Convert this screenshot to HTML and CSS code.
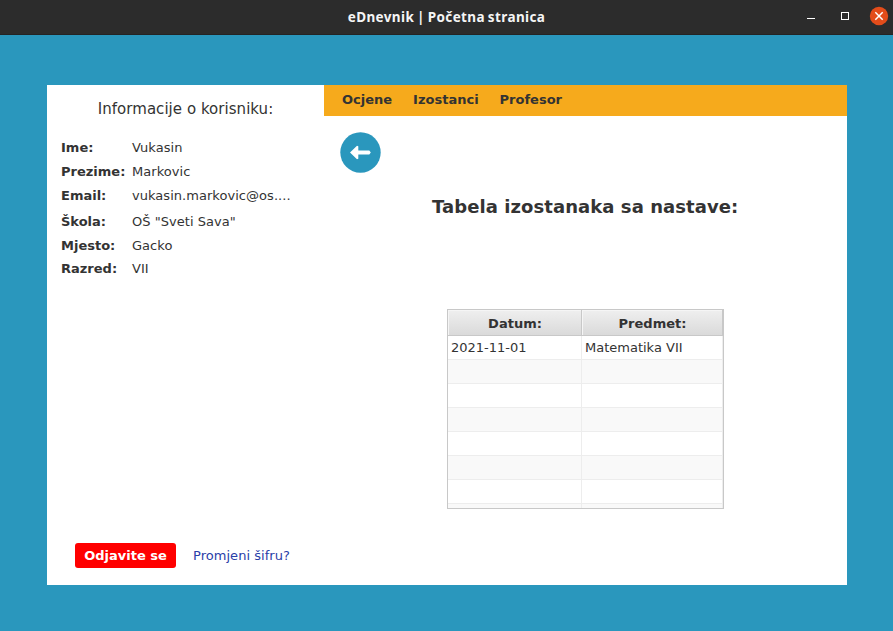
FILE: index.html
```html
<!DOCTYPE html>
<html lang="sr-Latn">
<head>
<meta charset="utf-8">
<title>eDnevnik | Početna stranica</title>
<link rel="stylesheet" href="styles.css">
</head>
<body>
<header class="titlebar">
  <h1 class="window-title">eDnevnik | Početna stranica</h1>
  <svg class="window-controls" width="100" height="34" viewBox="0 0 100 34">
    <path d="M14 18.5h8" stroke="#fff"/>
    <rect x="48.5" y="12.5" width="7" height="7" fill="none" stroke="#fff"/>
    <circle cx="86" cy="16" r="9.2" fill="#e34c1a"/>
    <path d="M82.3 12.3l7.4 7.4M89.7 12.3l-7.4 7.4" stroke="#fff" stroke-width="1.5"/>
  </svg>
</header>
<main class="panel">
  <aside class="sidebar">
    <h2 class="sidebar-title">Informacije o korisniku:</h2>
    <dl class="info">
      <dt>Ime:</dt><dd>Vukasin</dd>
      <dt>Prezime:</dt><dd>Markovic</dd>
      <dt>Email:</dt><dd>vukasin.markovic@os....</dd>
      <dt>Škola:</dt><dd>OŠ "Sveti Sava"</dd>
      <dt>Mjesto:</dt><dd>Gacko</dd>
      <dt>Razred:</dt><dd>VII</dd>
    </dl>
    <div class="actions">
      <button class="logout">Odjavite se</button>
      <a class="password-link">Promjeni šifru?</a>
    </div>
  </aside>
  <section class="content">
    <nav class="menu"><a>Ocjene</a><a>Izostanci</a><a>Profesor</a></nav>
    <svg class="back" width="42" height="42" viewBox="0 0 42 42">
      <circle cx="20.5" cy="20.5" r="20.2" fill="#2a97bd"/>
      <path d="M10 20.5l7-6.8 1.3.5v4.4h11l1.5 1.9-1.5 1.9h-11v4.4l-1.3.5z" fill="#fff"/>
    </svg>
    <h2 class="table-title">Tabela izostanaka sa nastave:</h2>
    <div class="table">
      <div class="row head"><span>Datum:</span><span>Predmet:</span></div>
      <div class="row"><span>2021-11-01</span><span>Matematika VII</span></div>
      <div class="row alt"><span></span><span></span></div>
      <div class="row"><span></span><span></span></div>
      <div class="row alt"><span></span><span></span></div>
      <div class="row"><span></span><span></span></div>
      <div class="row alt"><span></span><span></span></div>
      <div class="row"><span></span><span></span></div>
      <div class="row alt"><span></span><span></span></div>
    </div>
  </section>
</main>
</body>
</html>
```
FILE: styles.css
```css
* { box-sizing: border-box; }
body {
  margin: 0;
  height: 631px;
  overflow: hidden;
  background: #2a97bd;
  color: #333;
  font: 13px/16px "DejaVu Sans", sans-serif;
  white-space: nowrap;
}
h1, h2, dl, dd { margin: 0; }
.titlebar {
  display: grid;
  grid-template-columns: 100px 1fr 100px;
  height: 35px;
  background: #2c2c2c;
  border-bottom: 1px solid #242424;
}
.window-title {
  grid-column: 2;
  text-align: center;
  color: #f5f5f5;
  font: bold 13.5px/34px "Noto Sans", sans-serif;
  letter-spacing: 0.38px;
  word-spacing: -1px;
}
.panel {
  display: flex;
  width: 800px;
  height: 500px;
  margin: 50px 0 0 47px;
  background: #fff;
}
.sidebar {
  display: flex;
  flex-direction: column;
  width: 277px;
}
.sidebar-title {
  padding-top: 14px;
  text-align: center;
  font-size: 15px;
  line-height: 20px;
  font-weight: normal;
  letter-spacing: 0.04px;
}
.info {
  display: grid;
  grid-template-columns: 71px 1fr;
  grid-template-rows: 24px 24px 24px 28px 20px 26px;
  align-items: center;
  margin: 17px 0 0 14px;
}
.info dt { font-weight: bold; }
.info dd { letter-spacing: 0.04px; }
.actions {
  display: flex;
  align-items: center;
  gap: 17px;
  margin: auto 0 17px 28px;
}
.logout {
  width: 101px;
  height: 25px;
  padding: 0;
  border: 0;
  border-radius: 3px;
  background: #f00;
  color: #fff;
  font: bold 13px/25px "DejaVu Sans", sans-serif;
}
.password-link {
  color: #2a40a8;
  letter-spacing: 0.04px;
}
.content { flex: 1; }
.menu {
  display: flex;
  gap: 21px;
  height: 31px;
  padding-left: 18px;
  background: #f6aa1c;
  font-weight: bold;
  line-height: 30px;
}
.back {
  display: block;
  margin: 16px 0 0 16px;
}
.table-title {
  margin: 22px 0 0 108px;
  font-size: 18px;
  line-height: 22px;
  letter-spacing: 0.07px;
}
.table {
  width: 277px;
  height: 200px;
  margin: 91px 0 0 123px;
  overflow: hidden;
  border: 1px solid #c8c8c8;
}
.row {
  display: grid;
  grid-template-columns: 134px 141px;
  height: 24px;
  line-height: 23px;
}
.row span {
  padding-left: 3px;
  border-right: 1px solid #ededed;
  border-bottom: 1px solid #ededed;
}
.alt { background: #f9f9f9; }
.head {
  height: 26px;
  background: linear-gradient(#efefef, #d9d9d9);
  font-weight: bold;
  text-align: center;
}
.head span {
  padding: 2px 0 0 1px;
  border-color: #c8c8c8;
  box-shadow: inset 1px 1px #f5f5f5;
}
```
